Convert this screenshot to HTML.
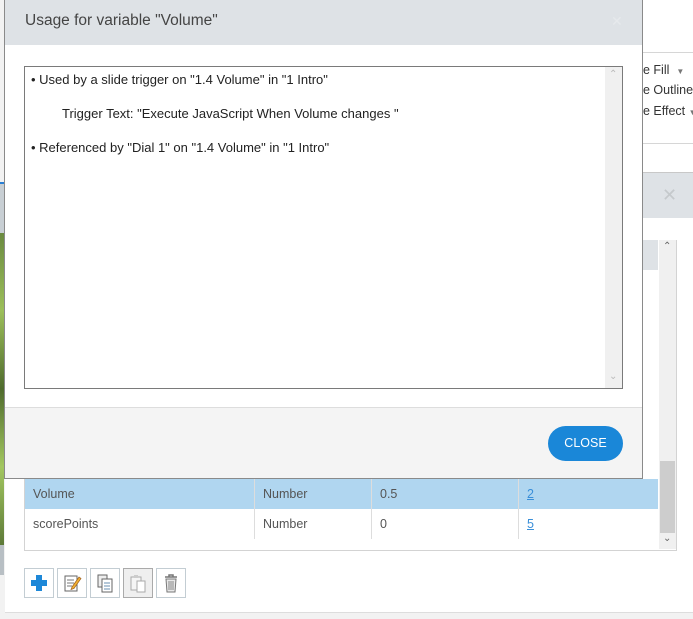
<!DOCTYPE html>
<html><head><meta charset="utf-8"><style>
*{box-sizing:border-box;margin:0;padding:0}
body{width:693px;height:619px;overflow:hidden;position:relative;background:#fff;font-family:"Liberation Sans",sans-serif;font-size:12px;color:#333}
.abs{position:absolute}
.t{font-size:13px;color:#222;white-space:nowrap}
.cell{position:absolute;top:0;height:30px;line-height:30px;padding-left:8px;color:#555;font-size:12.5px;border-right:1px solid #ddd}
.btn{position:absolute;top:568px;width:30px;height:30px;border:1px solid #c3cdd3;background:#fff}
</style></head><body>
<div class="abs" style="left:0;top:0;width:5px;height:619px;background:#f2f2f2"></div>
<div class="abs" style="left:0;top:182px;width:4px;height:2px;background:#2a7fd4"></div>
<div class="abs" style="left:0;top:184px;width:4px;height:49px;background:#c8cfd4"></div>
<div class="abs" style="left:0;top:233px;width:4px;height:312px;background:linear-gradient(#6a8a40,#9cbf5a,#4f6b2d,#a3c760,#5d7a38)"></div>
<div class="abs" style="left:0;top:545px;width:4px;height:30px;background:#b8bfc4"></div>
<div class="abs" style="left:642px;top:52px;width:51px;height:1px;background:#d6d6d6"></div>
<div class="abs t" style="left:643px;top:63px;color:#333;font-size:12.5px">e Fill &nbsp;<span style="font-size:8px;color:#777">▼</span></div>
<div class="abs t" style="left:643px;top:83px;color:#333;font-size:12.5px">e Outline</div>
<div class="abs t" style="left:643px;top:104px;color:#333;font-size:12.5px">e Effect <span style="font-size:8px;color:#777">▼</span></div>
<div class="abs" style="left:642px;top:143px;width:51px;height:1px;background:#d6d6d6"></div>
<div class="abs" style="left:642px;top:172px;width:51px;height:46px;background:#dee2e6;border-top:1px solid #c8c8c8"></div>
<div class="abs" style="left:662px;top:185px;color:#c5c9cc;font-size:18px">✕</div>
<div class="abs" style="left:24px;top:240px;width:653px;height:311px;border:1px solid #d3d3d3;border-top:none"></div>
<div class="abs" style="left:642px;top:240px;width:16px;height:30px;background:#dee2e6"></div>
<div class="abs" style="left:659px;top:240px;width:17px;height:309px;background:#f0f0f0"></div>
<div class="abs" style="left:660px;top:461px;width:15px;height:72px;background:#cdcdcd"></div>
<div class="abs" style="left:663px;top:241px;font-size:10px;color:#666">⌃</div>
<div class="abs" style="left:663px;top:533px;font-size:10px;color:#666">⌄</div>
<div class="abs" style="left:25px;top:479px;width:633px;height:30px;background:#b0d6f0">
<div class="cell" style="left:0;width:230px">Volume</div><div class="cell" style="left:230px;width:117px">Number</div><div class="cell" style="left:347px;width:147px">0.5</div><div class="cell" style="left:494px;border:none;color:#3a8fd9;text-decoration:underline">2</div></div>
<div class="abs" style="left:25px;top:509px;width:633px;height:30px">
<div class="cell" style="left:0;width:230px">scorePoints</div><div class="cell" style="left:230px;width:117px">Number</div><div class="cell" style="left:347px;width:147px">0</div><div class="cell" style="left:494px;border:none;color:#3a8fd9;text-decoration:underline">5</div></div>
<div class="btn" style="left:24px"><svg width="28" height="28"><path d="M11 7h6v5h5v6h-5v5h-6v-5H6v-6h5z" fill="#1e88d8" transform="translate(0,-1)"/></svg></div>
<div class="btn" style="left:57px"><svg width="28" height="28"><rect x="7" y="7" width="12" height="15" fill="#fff" stroke="#666"/><path d="M9 11h7M9 14h7M9 17h5" stroke="#777"/><path d="M14 18l7-10 2 1.5-7 10-3 1z" fill="#f0b030" stroke="#a06020" stroke-width=".7"/></svg></div>
<div class="btn" style="left:90px"><svg width="28" height="28"><rect x="7" y="6" width="9" height="12" fill="#eee" stroke="#666"/><rect x="11" y="10" width="10" height="13" fill="#fff" stroke="#666"/><path d="M13 14h6M13 17h6M13 20h6" stroke="#6a8fb0"/></svg></div>
<div class="btn" style="left:123px;background:#efefef;border-color:#aaa"><svg width="28" height="28"><rect x="7" y="8" width="10" height="13" fill="#f5f5f5" stroke="#aaa"/><rect x="10" y="6" width="4" height="3" fill="#ccc"/><rect x="13" y="12" width="8" height="11" fill="#fff" stroke="#aaa"/></svg></div>
<div class="btn" style="left:156px"><svg width="28" height="28"><path d="M8 8h12M12 8V6h4v2" stroke="#777" fill="none" stroke-width="1.5"/><path d="M9 10h10l-1 13h-8z" fill="#e8e8e8" stroke="#777"/><path d="M12 12v9M14 12v9M16 12v9" stroke="#888"/></svg></div>
<div class="abs" style="left:5px;top:612px;width:688px;height:7px;background:#f2f2f2;border-top:1px solid #ddd"></div>
<div class="abs" style="left:4px;top:0;width:639px;height:479px;background:#fff;border:1px solid #8a8a8a;border-top:none">
 <div class="abs" style="left:0;top:0;width:637px;height:45px;background:#dee2e6"></div>
 <div class="abs" style="left:20px;top:12px;font-size:15.5px;color:#444">Usage for variable "Volume"</div>
 <div class="abs" style="left:606px;top:13px;color:#e6e9ec;font-size:14px">✕</div>
 <div class="abs" style="left:19px;top:66px;width:599px;height:323px;border:1px solid #7a7a7a;background:#fff">
  <div class="abs t" style="left:6px;top:5px">• Used by a slide trigger on "1.4 Volume" in "1 Intro"</div>
  <div class="abs t" style="left:37px;top:39px">Trigger Text: "Execute JavaScript When Volume changes "</div>
  <div class="abs t" style="left:6px;top:73px">• Referenced by "Dial 1" on "1.4 Volume" in "1 Intro"</div>
  <div class="abs" style="left:580px;top:0;width:17px;height:321px;background:#f0f0f0"></div>
  <div class="abs" style="left:584px;top:2px;font-size:10px;color:#bbb">⌃</div>
  <div class="abs" style="left:584px;top:304px;font-size:10px;color:#bbb">⌄</div>
 </div>
 <div class="abs" style="left:0;top:407px;width:637px;height:71px;background:#f4f4f4;border-top:1px solid #ddd"></div>
 <div class="abs" style="left:543px;top:426px;width:75px;height:35px;border-radius:18px;background:#1a87d8;color:#fff;font-size:12.5px;text-align:center;line-height:35px">CLOSE</div>
</div>
</body></html>
